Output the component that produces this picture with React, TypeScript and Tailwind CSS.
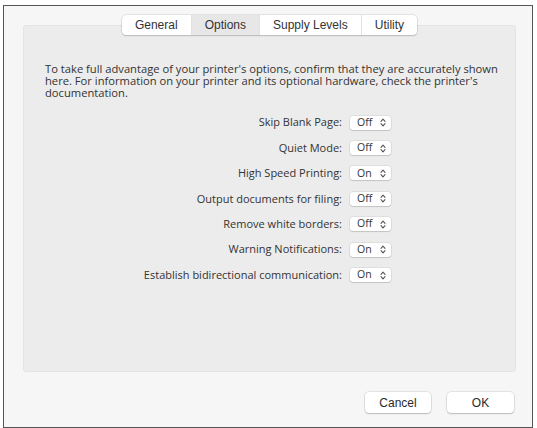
import React from 'react'

const TABS = ['General', 'Options', 'Supply Levels', 'Utility']

const OPTIONS: { label: string; value: string }[] = [
  { label: 'Skip Blank Page:', value: 'Off' },
  { label: 'Quiet Mode:', value: 'Off' },
  { label: 'High Speed Printing:', value: 'On' },
  { label: 'Output documents for filing:', value: 'Off' },
  { label: 'Remove white borders:', value: 'Off' },
  { label: 'Warning Notifications:', value: 'On' },
  { label: 'Establish bidirectional communication:', value: 'On' },
]

function UpDown() {
  return (
    <svg width="6" height="9" viewBox="0 0 6 9" fill="none" stroke="#555" strokeWidth={1.1} strokeLinecap="round" strokeLinejoin="round">
      <path d="M1 3.3L3 1.2L5 3.3" />
      <path d="M1 5.7L3 7.8L5 5.7" />
    </svg>
  )
}

function Popup({ value }: { value: string }) {
  return (
    <div className="w-[41px] h-[14px] flex items-center justify-between pl-[7px] pr-[5px] bg-white rounded-[3px] shadow-[0_0_0_0.5px_rgba(0,0,0,0.12),0_1px_1px_rgba(0,0,0,0.12)] text-[10.5px] text-[#333]">
      <span>{value}</span>
      <UpDown />
    </div>
  )
}

export default function App() {
  return (
    <div className="w-[537px] h-[428px] bg-white pt-[5px] pl-[3px] font-['Liberation_Sans',Arial,sans-serif]">
      <div className="w-[530px] h-[423px] border border-[#555] bg-[#f6f6f6] flex flex-col">
        {/* tab strip */}
        <div className="mt-[9px] flex justify-center relative z-10 pl-[3px]">
          <div className="flex h-[20px] bg-white rounded-[4px] shadow-[0_0_0_0.5px_rgba(0,0,0,0.15),0_1px_1.5px_rgba(0,0,0,0.15)] text-[12px] text-[#333] overflow-hidden">
            {TABS.map((t, i) => (
              <div
                key={t}
                className={`flex items-center px-[13px] ${i === 1 ? 'bg-[#e7e7e7]' : ''} ${i > 0 ? 'border-l border-[#e2e2e2]' : ''}`}
              >
                {t}
              </div>
            ))}
          </div>
        </div>

        {/* panel */}
        <div className="-mt-[10px] ml-[19px] w-[493px] h-[347px] bg-[#ececec] rounded-[3px] border border-[#e4e4e4] font-['Open_Sans',sans-serif]">
          <p className="mt-[37px] ml-[21px] text-[11.2px] leading-[12px] text-[#333] whitespace-nowrap">
            To take full advantage of your printer's options, confirm that they are accurately shown
            <br />
            here. For information on your printer and its optional hardware, check the printer's
            <br />
            documentation.
          </p>
          <div className="mt-[11px] flex flex-col">
            {OPTIONS.map(o => (
              <div key={o.label} className="h-[25.4px] flex items-center">
                <div className="w-[318px] text-right text-[11px] text-[#333] whitespace-nowrap">{o.label}</div>
                <div className="ml-[8px]">
                  <Popup value={o.value} />
                </div>
              </div>
            ))}
          </div>
        </div>

        {/* buttons */}
        <div className="mt-[20px] flex justify-end gap-[16px] pr-[18px]">
          <button className="w-[66px] h-[21px] bg-white rounded-[4px] shadow-[0_0_0_0.5px_rgba(0,0,0,0.15),0_1px_1.5px_rgba(0,0,0,0.18)] text-[12px] text-[#2a2a2a]">
            Cancel
          </button>
          <button className="w-[67px] h-[21px] bg-white rounded-[4px] shadow-[0_0_0_0.5px_rgba(0,0,0,0.15),0_1px_1.5px_rgba(0,0,0,0.18)] text-[12px] text-[#2a2a2a]">
            OK
          </button>
        </div>
      </div>
    </div>
  )
}
